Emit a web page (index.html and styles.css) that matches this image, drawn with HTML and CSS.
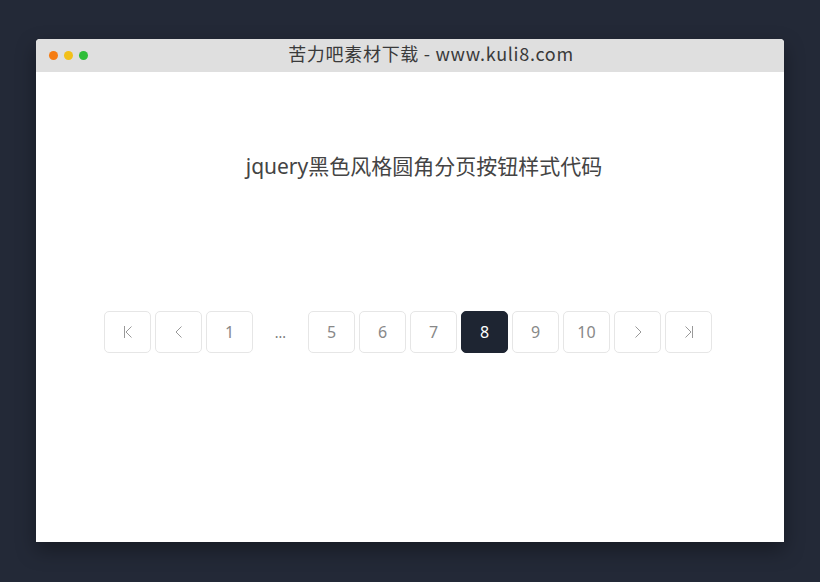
FILE: index.html
```html
<!DOCTYPE html>
<html>
  <head>
    <meta charset="utf-8" />
    <title>苦力吧素材下载</title>
    <link rel="stylesheet" href="styles.css">
  </head>
  <body>
    <div class="window">
      <!-- Title bar -->
      <div class="titlebar">
        <span class="dot orange"></span>
        <span class="dot yellow"></span>
        <span class="dot green"></span>
        <span class="title">苦力吧素材下载 - www.kuli8.com</span>
      </div>

      <div class="content">
        <h1>jquery黑色风格圆角分页按钮样式代码</h1>

        <ul class="pager">
          <li><a href="#" class="icon">
            <svg width="12" height="14" viewBox="0 0 12 14"><path d="M2.5 1v12M9.5 1.5L4 7l5.5 5.5" fill="none" stroke="#999" stroke-width="1"/></svg>
          </a></li>
          <li><a href="#" class="icon">
            <svg width="12" height="14" viewBox="0 0 12 14"><path d="M8.5 1.5L3 7l5.5 5.5" fill="none" stroke="#999" stroke-width="1"/></svg>
          </a></li>
          <li><a href="#">1</a></li>
          <li><span class="dots">...</span></li>
          <li><a href="#">5</a></li>
          <li><a href="#">6</a></li>
          <li><a href="#">7</a></li>
          <li><a href="#" class="active">8</a></li>
          <li><a href="#">9</a></li>
          <li><a href="#">10</a></li>
          <li><a href="#" class="icon">
            <svg width="12" height="14" viewBox="0 0 12 14"><path d="M3.5 1.5L9 7l-5.5 5.5" fill="none" stroke="#999" stroke-width="1"/></svg>
          </a></li>
          <li><a href="#" class="icon">
            <svg width="12" height="14" viewBox="0 0 12 14"><path d="M2.5 1.5L8 7l-5.5 5.5M9.5 1v12" fill="none" stroke="#999" stroke-width="1"/></svg>
          </a></li>
        </ul>
      </div>
    </div>
  </body>
</html>
```

FILE: styles.css
```css
html,
body {
  margin: 0;
  height: 100%;
}
body {
  background: #232937;
  font-family: "Noto Sans", "Noto Sans CJK SC", sans-serif;
  padding: 39px 36px 0;
  box-sizing: border-box;
}
.window {
  width: 748px;
  height: 503px;
  background: #fff;
  border-radius: 4px 4px 0 0;
  overflow: hidden;
  box-shadow: 0 8px 20px rgba(0, 0, 0, 0.35);
}
.titlebar {
  height: 33px;
  background: #dfdfdf;
  display: flex;
  align-items: center;
  padding-left: 13px;
  position: relative;
}
.dot {
  width: 9px;
  height: 9px;
  border-radius: 50%;
  margin-right: 6px;
}
.orange {
  background: #f57c12;
}
.yellow {
  background: #f2c01a;
}
.green {
  background: #2ebd38;
}
.title {
  position: absolute;
  left: 42px;
  right: 0;
  text-align: center;
  font-family: "Noto Sans CJK SC", sans-serif;
  font-size: 18px;
  letter-spacing: 0.7px;
  color: #3a3a3a;
  line-height: 33px;
  top: -2px;
}
.content {
  padding-top: 78px;
}
h1 {
  margin: 0;
  text-align: center;
  font-weight: normal;
  font-size: 21px;
  color: #444;
  line-height: 32px;
  padding-left: 28px;
}
.pager {
  list-style: none;
  margin: 129px 0 0;
  padding: 0 4px 0 0;
  display: flex;
  justify-content: center;
  gap: 4px;
}
.pager a,
.pager .dots {
  box-sizing: border-box;
  width: 47px;
  height: 42px;
  display: flex;
  align-items: center;
  justify-content: center;
  font-size: 16px;
  color: #888;
  text-decoration: none;
}
.pager a {
  border: 1px solid #e6e6e6;
  border-radius: 5px;
}
.pager .dots {
  color: #777;
  font-size: 14px;
}
.pager a.active {
  background: #1e2532;
  border-color: #1e2532;
  color: #fff;
}
```
